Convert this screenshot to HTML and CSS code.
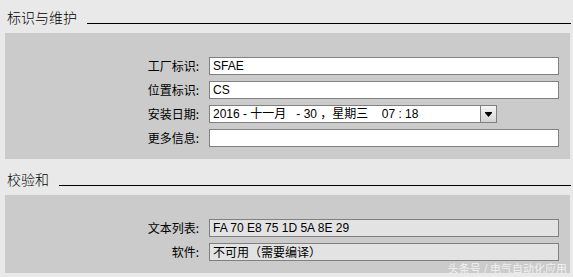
FILE: index.html
```html
<!DOCTYPE html>
<html lang="zh-CN">
<head>
    <meta charset="UTF-8">
    <title>标识与维护</title>
    <link rel="stylesheet" href="styles.css">
</head>
<body>
    <div class="page">
        <section class="group">
            <div class="group-head">
                <span class="group-title">标识与维护</span>
                <span class="group-rule"></span>
            </div>
            <div class="group-body">
                <div class="field-label">工厂标识:</div>
                <div class="field">SFAE</div>
                <div class="field-label">位置标识:</div>
                <div class="field">CS</div>
                <div class="field-label">安装日期:</div>
                <div class="field field-date">
                    <span class="date-text">2016 - 十一月   - 30 ，星期三    07 : 18</span>
                    <span class="date-button">
                        <svg width="7" height="5" viewBox="0 0 7 5"><rect x="0" y="0" width="7" height="1" fill="#000"/><polygon points="0,1 7,1 3.5,5" fill="#000"/></svg>
                    </span>
                </div>
                <div class="field-label">更多信息:</div>
                <div class="field"></div>
            </div>
        </section>

        <section class="group group-second">
            <div class="group-head">
                <span class="group-title">校验和</span>
                <span class="group-rule"></span>
            </div>
            <div class="group-body">
                <div class="field-label">文本列表:</div>
                <div class="field field-readonly field-hex">FA 70 E8 75 1D 5A 8E 29</div>
                <div class="field-label">软件:</div>
                <div class="field field-readonly">不可用（需要编译）</div>
            </div>
        </section>

        <div class="watermark">头条号 / 电气自动化应用</div>
    </div>
</body>
</html>
```

FILE: styles.css
```css
html, body {
    margin: 0;
    padding: 0;
}
body {
    background-color: #e9e9e9;
    color: #000000;
    font-family: "Noto Sans CJK SC", sans-serif;
    font-size: 12px;
}
.page {
    position: relative;
    padding: 0 3px 0 5px;
}
.group-head {
    display: flex;
    align-items: flex-end;
    height: 33px;
    padding-bottom: 9px;
    box-sizing: border-box;
}
.group-second .group-head {
    height: 36px;
}
.group-title {
    font-size: 14px;
    line-height: 14px;
    font-weight: 300;
    padding-left: 2px;
}
.group-rule {
    flex: 1;
    height: 1px;
    margin-left: 10px;
    margin-right: -1px;
    background-color: #000000;
}
.group-body {
    display: grid;
    grid-template-columns: 204px 350px;
    grid-auto-rows: 18px;
    row-gap: 6px;
    padding: 24px 11px 12px 0;
    background-color: #cbcbcb;
}
.field-label {
    text-align: right;
    line-height: 18px;
    padding-right: 10px;
}
.field {
    border: 1px solid #808080;
    background-color: #ffffff;
    padding-left: 3px;
    line-height: 16px;
    font-family: "Liberation Sans", "Noto Sans CJK SC", sans-serif;
    font-size: 12px;
    white-space: pre;
    overflow: hidden;
}
.field-readonly {
    background-color: #e3e3e3;
    font-family: "Noto Sans CJK SC", sans-serif;
}
.field-hex {
    font-family: "Liberation Sans", sans-serif;
}
.field-date {
    display: flex;
    width: 288px;
    box-sizing: border-box;
    padding-left: 0;
}
.date-text {
    flex: 1;
    padding-left: 3px;
}
.date-button {
    display: flex;
    align-items: center;
    justify-content: center;
    width: 15px;
    border-left: 1px solid #808080;
    background: linear-gradient(#f6f6f6, #d4d4d4);
}
.watermark {
    position: absolute;
    right: 6px;
    top: 262px;
    font-size: 11px;
    line-height: 12px;
    color: rgba(255, 255, 255, 0.75);
}
```
